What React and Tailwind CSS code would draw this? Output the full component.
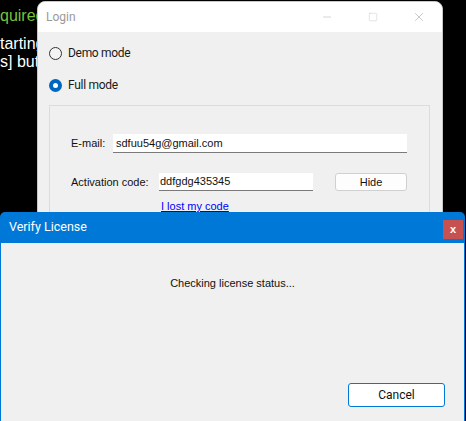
import { Minus, Square, X } from "lucide-react";

const ui = { fontFamily: 'Roboto, "Noto Sans", sans-serif' };
const win = { fontFamily: '"Liberation Sans", Arial, sans-serif' };

function Radio({ checked, label }) {
  return (
    <label className="flex h-[20px] items-center gap-[6px]">
      {checked ? (
        <span className="flex h-[13px] w-[13px] items-center justify-center rounded-full bg-[#0067c0]">
          <span className="h-[5px] w-[5px] rounded-full bg-white" />
        </span>
      ) : (
        <span className="h-[13px] w-[13px] rounded-full border border-[#333] bg-[#f4f4f4]" />
      )}
      <span className="text-[12px] tracking-[-0.3px] text-[#1a1a1a]" style={ui}>
        {label}
      </span>
    </label>
  );
}

function LoginWindow() {
  return (
    <div className="absolute left-[37px] top-[1px] flex h-[440px] w-[406px] flex-col overflow-hidden rounded-t-[8px] border border-[#c8c8c8] bg-[#f0f0f0]">
      <div className="flex h-[30px] shrink-0 items-center bg-white">
        <span className="flex-1 pl-[8px] text-[12px] text-[#9a9a9a]" style={ui}>
          Login
        </span>
        <span className="flex h-full w-[46px] items-center justify-center text-[#a8a8a8]">
          <Minus size={12} strokeWidth={1} />
        </span>
        <span className="flex h-full w-[46px] items-center justify-center text-[#c8c8c8]">
          <Square size={10} strokeWidth={1.2} />
        </span>
        <span className="flex h-full w-[46px] items-center justify-center text-[#a0a0a0]">
          <X size={14} strokeWidth={1} />
        </span>
      </div>

      <div className="flex flex-col pl-[11px] pt-[11px]">
        <Radio label="Demo mode" />
        <div className="mt-[12px]">
          <Radio checked label="Full mode" />
        </div>

        <div className="mt-[10px] h-[400px] w-[381px] border border-[#dcdcdc] pl-[21px] pt-[28px] text-[11px] text-[#111]" style={win}>
          <div className="flex items-center">
            <span className="w-[42px]">E-mail:</span>
            <div className="flex h-[19px] w-[294px] items-center border-b border-[#7a7a7a] bg-white pl-[3px]">
              sdfuu54g@gmail.com
            </div>
          </div>

          <div className="mt-[20px] flex items-center">
            <span className="w-[88px]">Activation code:</span>
            <div className="flex h-[18px] w-[154px] items-center border-b border-[#7a7a7a] bg-white pl-[1px]">
              ddfgdg435345
            </div>
            <button className="ml-[22px] flex h-[18px] w-[72px] items-center justify-center rounded-[3px] border border-[#d0d0d0] bg-[#fdfdfd] text-[11px]">
              Hide
            </button>
          </div>

          <a className="ml-[90px] mt-[7px] block text-[#0000ff] underline">I lost my code</a>
        </div>
      </div>
    </div>
  );
}

function VerifyDialog() {
  return (
    <div className="absolute left-0 top-[212px] flex h-[209px] w-[465px] flex-col">
      <div className="flex h-[31px] shrink-0 items-center rounded-t-[5px] bg-[#0078d7] pl-[9px] pr-[2px]">
        <span className="flex-1 text-[12.5px] text-white" style={ui}>
          Verify License
        </span>
        <span className="mt-[4px] flex h-[19px] w-[20px] items-center justify-center bg-[#c75050] pb-[1px] text-[11px] font-bold leading-none text-white" style={win}>
          x
        </span>
      </div>
      <div className="flex flex-1 flex-col items-center border-x border-[#0078d7] bg-[#f0f0f0]">
        <p className="pt-[32px] text-[11px] text-[#111]" style={win}>
          Checking license status...
        </p>
        <button className="mb-[14px] mr-[19px] mt-auto flex h-[24px] w-[97px] items-center justify-center self-end rounded-[3px] border border-[#0078d7] bg-white text-[12px] text-[#111]" style={ui}>
          Cancel
        </button>
      </div>
    </div>
  );
}

export default function App() {
  return (
    <div className="relative h-[421px] w-[466px] overflow-hidden bg-black">
      {/* console output behind the windows */}
      <div className="pt-[7px] text-[16px] leading-[18px]" style={win}>
        <div className="text-[#78c23a]">quired</div>
        <div className="mt-[10px] text-white">tarting</div>
        <div className="text-white">s] butt</div>
      </div>

      <LoginWindow />
      <VerifyDialog />
    </div>
  );
}
